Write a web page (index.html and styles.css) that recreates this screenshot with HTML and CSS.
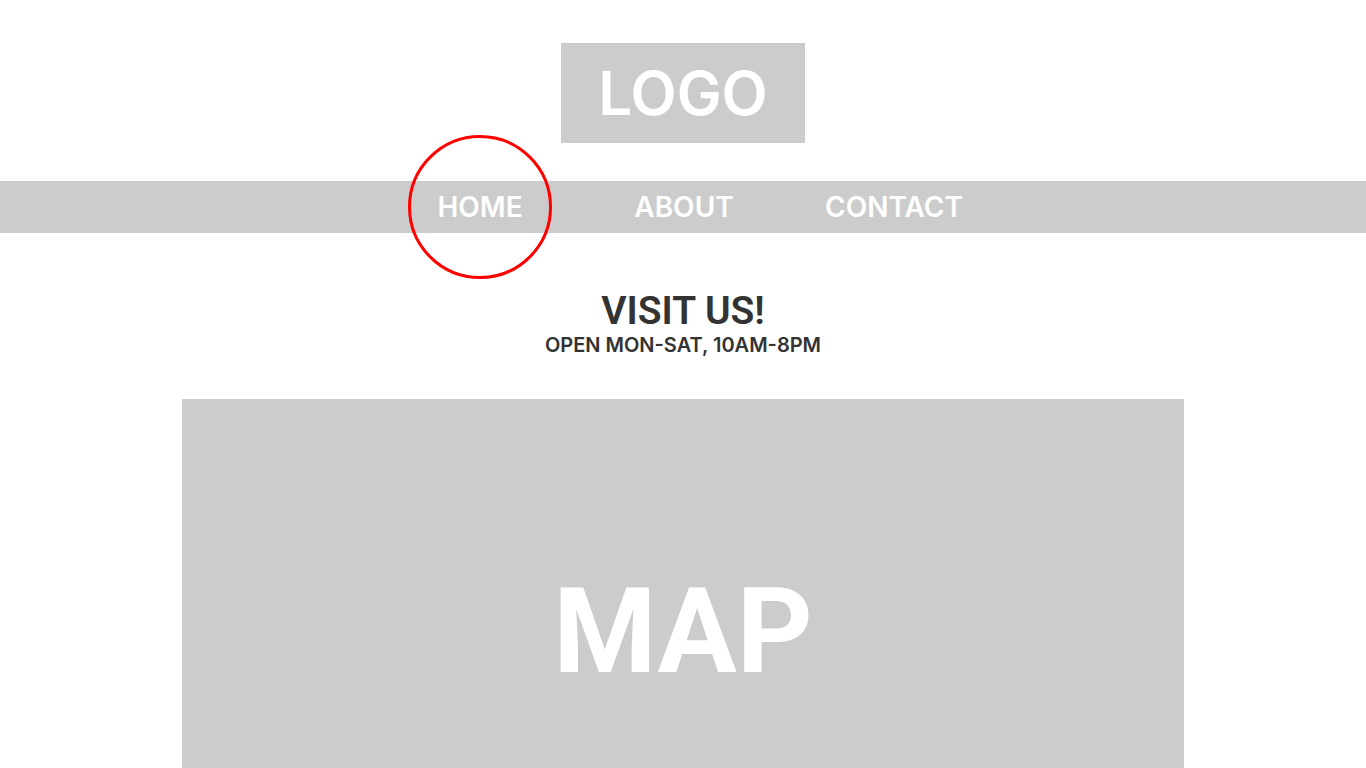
FILE: index.html
```html
<!DOCTYPE html>
<html lang="en">
<head>
<meta charset="utf-8">
<meta name="viewport" content="width=device-width, initial-scale=1">
<title>Visit us</title>
<link rel="stylesheet" href="styles.css">
</head>
<body>
<header class="header"><a class="logo" href="#">LOGO</a></header>
<nav class="nav" aria-label="Main">
<ul class="menu">
<li class="item"><a class="link current" href="#" aria-current="page">HOME</a></li>
<li class="item"><a class="link" href="#">ABOUT</a></li>
<li class="item"><a class="link" href="#">CONTACT</a></li>
</ul>
</nav>
<main class="main">
<h1 class="title">VISIT US!</h1>
<p class="hours">OPEN MON-SAT, 10AM-8PM</p>
<section class="map">MAP</section>
</main>
</body>
</html>
```
FILE: styles.css
```css
*, *::after { box-sizing: border-box; }
body {
  display: flex;
  flex-direction: column;
  min-height: 100vh;
  margin: 0;
  background: #fff;
  color: #333;
  font-family: Inter, "Liberation Sans", sans-serif;
  font-weight: 600;
}
.header {
  display: flex;
  justify-content: center;
  padding: 43px 0 38px;
}
.logo {
  padding: 0 37px;
  background: #ccc;
  color: #fff;
  font-size: 60px;
  line-height: 100px;
  text-decoration: none;
}
.nav {
  display: flex;
  justify-content: center;
  background: #ccc;
}
.menu {
  display: grid;
  grid-template-columns: 204px 204px 216px;
  justify-items: center;
  margin: 0;
  padding: 0 0 0 14px;
  list-style: none;
}
.link {
  position: relative;
  display: block;
  color: #fff;
  font-size: 28px;
  line-height: 52px;
  text-decoration: none;
}
.current::after {
  content: "";
  position: absolute;
  top: 50%;
  left: 50%;
  width: 144px;
  height: 144px;
  border: 3px solid #f00;
  border-radius: 50%;
  transform: translate(-50%, -50%);
}
.main {
  display: flex;
  flex: 1;
  flex-direction: column;
  align-items: center;
  padding-top: 56px;
}
.title {
  margin: 0;
  font-family: Roboto, "Liberation Sans", sans-serif;
  font-size: 39px;
  font-weight: 600;
  line-height: 44px;
}
.hours {
  margin: 0 0 42px;
  font-size: 20px;
  line-height: 24px;
}
.map {
  display: flex;
  flex: 1;
  align-items: center;
  justify-content: center;
  width: 100%;
  max-width: 1002px;
  padding-top: 96px;
  background: #ccc;
  color: #fff;
  font-family: Roboto, "Liberation Sans", sans-serif;
  font-size: 118px;
  font-weight: 700;
  line-height: 120px;
}
```
